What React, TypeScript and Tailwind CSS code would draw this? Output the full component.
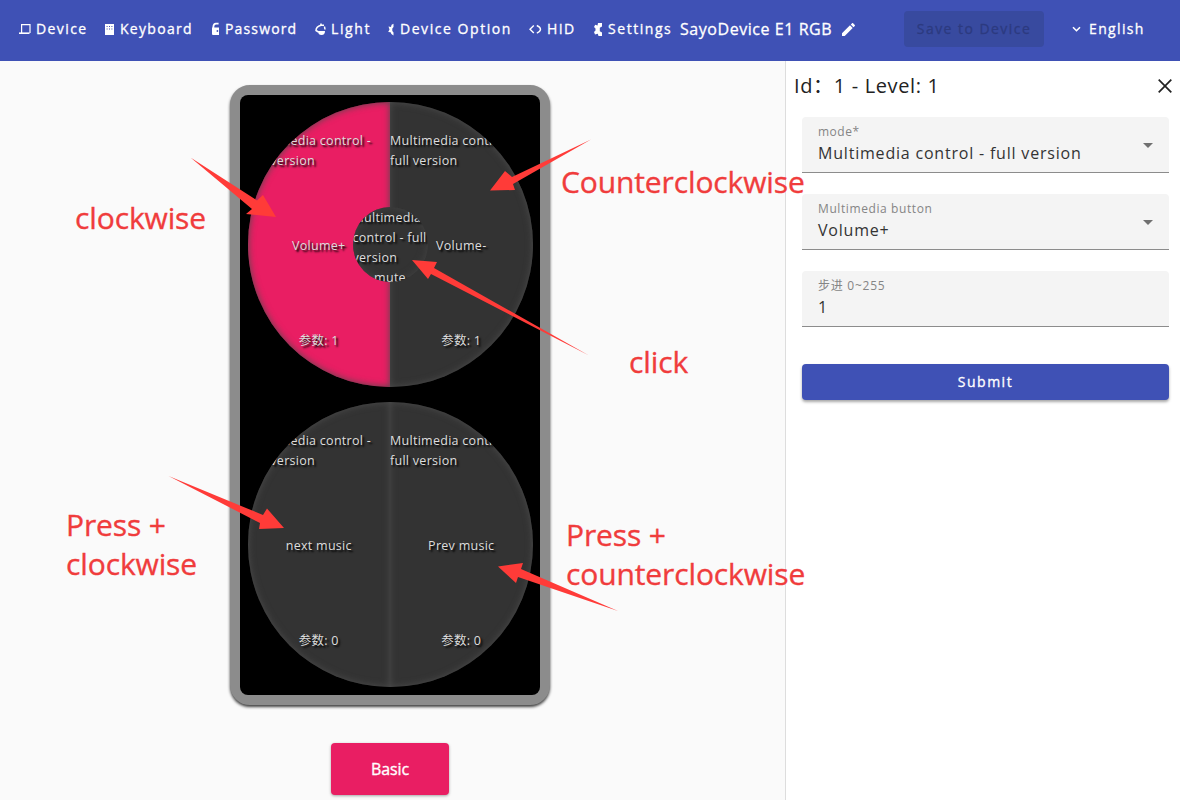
import React from 'react';

const Laptop = () => (
  <svg width="17" height="18" viewBox="0 0 17 18" fill="none" stroke="white" strokeWidth="1.2">
    <path d="M2.6 13V4.6H11V13" />
    <path d="M0 13.2H10.5" strokeWidth="1.6" />
  </svg>
);
const Keys = () => (
  <svg width="16" height="18" viewBox="0 0 16 18" fill="white">
    <path d="M1 4h9v11H1z" />
    <path d="M2.6 6h1v1h-1zM5 6h1v1H5zM7.4 6h1v1h-1zM2.6 8.6h1v1h-1zM5 8.6h1v1H5zM7.4 8.6h1v1h-1z" fill="#3f51b5" />
  </svg>
);
const Lock = () => (
  <svg width="15" height="18" viewBox="0 0 15 18" fill="white">
    <path d="M2 7.500h7V15H3q-1 0-1-1z" />
    <path d="M3.400 8V6.500Q3.600 3.800 6 3.600H8.600" fill="none" stroke="white" strokeWidth="1.800" />
    <circle cx="7.400" cy="11" r=".9" fill="#3f51b5" />
  </svg>
);
const Bulb = () => (
  <svg width="16" height="18" viewBox="0 0 16 18" fill="none" stroke="white" strokeWidth="1.500">
    <path d="M9 5.300H6C3.500 6 1 8 1 10.500L3.500 12" />
    <path d="M6 3.500V5.500M9.500 6.500L10 9.500" />
    <path d="M3 11H10Q10 15 6.500 15T3 11" fill="white" stroke="none" />
  </svg>
);
const HalfGear = () => (
  <svg width="13" height="18" viewBox="0 0 13 18" fill="white">
    <path d="M6.500 3.800L4.600 4.800 4 7 1.500 6.500 2.500 9.500 1.200 12 3.600 12.200 4.400 14 6.500 15.500V12.500L5.300 11V8.500L6.500 7z" />
  </svg>
);
const Code = () => (
  <svg width="18" height="18" viewBox="0 0 18 18" fill="none" stroke="white" strokeWidth="1.400">
    <path d="M4.800 5.500L1 9.300 4.800 13.100M7.800 5.500Q11.500 7 11.500 9.300T7.800 13.100" />
  </svg>
);
const Gear = () => (
  <svg width="15" height="18" viewBox="0 0 15 18" fill="white">
    <path d="M5 3H9V6.500L6.800 7.800V11.200L9 12.500V16H5.500L4.800 13.800 2 14.500 1 12 2.500 10.500V8.500L1 7 2.200 4.800 4.500 5.500z" />
  </svg>
);

const nav = [
  { label: 'Device', icon: <Laptop />, box: 'w-[85px]', text: 'tracking-[1.4px]' },
  { label: 'Keyboard', icon: <Keys />, box: 'w-[106px]', text: 'tracking-[1.3px]' },
  { label: 'Password', icon: <Lock />, box: 'w-[105px]', text: 'tracking-[1.15px]' },
  { label: 'Light', icon: <Bulb />, box: 'w-[72px]', text: 'tracking-[1.6px]' },
  { label: 'Device Option', icon: <HalfGear />, box: 'w-[142px]', text: 'tracking-[1.55px]' },
  { label: 'HID', icon: <Code />, box: 'w-[64px]', text: 'tracking-[1.4px]' },
  { label: 'Settings', icon: <Gear />, box: 'w-[87px]', text: 'tracking-[1.55px]' },
];

function Header() {
  return (
    <header className="flex h-[61px] shrink-0 items-center bg-[#3f51b5] pb-[3px] pl-[19px] text-sm text-white [-webkit-text-stroke:0.300px]">
      {nav.map((n) => (
        <div key={n.label} className={`flex shrink-0 items-center whitespace-nowrap ${n.box}`}>
          {n.icon}
          <span className={n.text}>{n.label}</span>
        </div>
      ))}
      <span className="w-[162px] shrink-0 whitespace-nowrap text-base tracking-[0.550px]">SayoDevice E1 RGB</span>
      <svg width="13" height="13" viewBox="3 3 18 18" fill="white" className="shrink-0">
        <path d="M3 17.250V21h3.750L17.810 9.940l-3.750-3.750L3 17.250zM20.710 7.040a1 1 0 0 0 0-1.410l-2.340-2.340a1 1 0 0 0-1.410 0l-1.830 1.830 3.750 3.750 1.830-1.830z" />
      </svg>
      <button className="ml-[49px] h-9 w-[140px] shrink-0 whitespace-nowrap rounded bg-[#384a9f] tracking-[1.450px] text-[#2c3a80]">
        Save to Device
      </button>
      <svg width="9" height="8" viewBox="0 0 9 8" className="ml-7 shrink-0" fill="none" stroke="white" strokeWidth="1.600">
        <path d="M1 2.200L4.500 5.700 8 2.200" />
      </svg>
      <span className="ml-2 tracking-[1.350px]">English</span>
    </header>
  );
}

function Half({ title, action, value, active, side }: { title: string; action: string; value: string; active?: boolean; side: 'l' | 'r' }) {
  return (
    <div
      className={`grid h-full w-1/2 grid-rows-3 items-center overflow-hidden pt-[3px] shadow-[inset_0_0_7px_#4c4c4c] ${
        active ? 'bg-[#e91e63]' : 'bg-[#333]'
      } ${side === 'l' ? 'rounded-l-full' : 'rounded-r-full'}`}
    >
      <div className="w-[142px] pb-0.5">{title}</div>
      <div className="text-center">{action}</div>
      <div className="pt-0.5 text-center">{value}</div>
    </div>
  );
}

const MODE = 'Multimedia control - full version';

function Pad() {
  return (
    <div className="h-[620px] w-[320px] rounded-[20px] border-10 border-[#8c8c8c] bg-[#8c8c8c] shadow-[0_2px_3px_rgba(0,0,0,0.75)]">
      <div className="flex h-full flex-col items-center gap-[15px] rounded-lg bg-black pt-[7px] text-[12.500px] leading-5 tracking-[0.280px] text-[#ddd] [text-shadow:2px_2px_2px_#000]">
        <div className="relative flex h-[285px] w-[285px]">
          <Half side="l" title={MODE} action="Volume+" value="参数: 1" active />
          <Half side="r" title={MODE} action="Volume-" value="参数: 1" />
          <div className="absolute left-[105px] top-[105px] h-[75px] w-[75px] overflow-hidden rounded-full bg-[#333] pt-px shadow-[inset_0_0_8px_#444]">
            <div className="w-[80px]">{MODE}</div>
            <div className="text-center">mute</div>
          </div>
        </div>
        <div className="flex h-[285px] w-[285px]">
          <Half side="l" title={MODE} action="next music" value="参数: 0" />
          <Half side="r" title={MODE} action="Prev music" value="参数: 0" />
        </div>
      </div>
    </div>
  );
}

function Field({ label, value, select, labelClass }: { label: string; value: string; select?: boolean; labelClass: string }) {
  return (
    <div className="flex h-14 items-center justify-between rounded-t border-b border-[#8c8c8c] bg-[#f4f4f4] pl-4 pr-4">
      <div className="flex flex-col">
        <span className={`text-xs leading-[18px] text-[#858585] ${labelClass}`}>{label}</span>
        <span className="-mt-px pb-px text-base leading-[26px] tracking-[0.800px] text-[#333]">{value}</span>
      </div>
      {select && (
        <svg width="10" height="5" viewBox="0 0 10 5" fill="#707070" className="mt-0.5">
          <path d="M0 0h10L5 5z" />
        </svg>
      )}
    </div>
  );
}

function Panel() {
  return (
    <aside className="w-[395px] shrink-0 border-l border-[#ddd] bg-white">
      <div className="flex h-[50px] items-center justify-between pl-2 pr-2 text-[#222]">
        <h2 className="whitespace-pre text-xl tracking-[0.650px]">Id：1 - Level: 1</h2>
        <svg width="14" height="14" viewBox="0 0 14 14" fill="none" stroke="#222" strokeWidth="1.700">
          <path d="M.7.7l12.600 12.600M13.300.7L.7 13.300" />
        </svg>
      </div>
      <div className="flex flex-col gap-[21px] pl-4 pr-[11px] pt-[6px]">
        <Field label="mode*" value={MODE} select labelClass="tracking-[0.500px]" />
        <Field label="Multimedia button" value="Volume+" select labelClass="tracking-[0.600px]" />
        <Field label="步进 0~255" value="1" labelClass="tracking-[0.750px]" />
        <button className="mt-4 h-9 rounded bg-[#3f51b5] text-sm tracking-[1.500px] text-white shadow-[0_2px_3px_rgba(0,0,0,0.350)] [-webkit-text-stroke:0.300px]">
          Submit
        </button>
      </div>
    </aside>
  );
}

const notes = [
  { text: 'clockwise', pos: 'left-[75px] top-[198px]' },
  { text: 'Counterclockwise', pos: 'left-[561px] top-[162px]' },
  { text: 'click', pos: 'left-[629px] top-[342px]' },
  { text: 'Press +\nclockwise', pos: 'left-[66px] top-[505px]' },
  { text: 'Press +\ncounterclockwise', pos: 'left-[566px] top-[515px]' },
];

function Annotations() {
  return (
    <div className="pointer-events-none absolute inset-0">
      <svg width="1180" height="800" fill="#ff3b38">
        <path d="M190.500 157.500L257 200.500 263 195 276 217 246 214 252 209z" />
        <path d="M591 139.500L512 177 505 171 490 190.500 515 190 513 184z" />
        <path d="M589 355.500L434 268 437 262 412 260 428 279 431 274z" />
        <path d="M168.500 476L263 515 267 508.500 284 528 259 529 260 523z" />
        <path d="M618 611L521 569 523 563 498 566.500 516 583 518 577z" />
      </svg>
      {notes.map((n) => (
        <div key={n.text} className={`absolute whitespace-pre text-[30px] leading-[39px] tracking-[-0.120px] text-[#f03c3c] [-webkit-text-stroke:0.350px] ${n.pos}`}>
          {n.text}
        </div>
      ))}
    </div>
  );
}

export default function App() {
  return (
    <div className="relative flex h-[800px] w-[1180px] flex-col overflow-hidden bg-[#fafafa] font-['Open_Sans','Noto_Sans_CJK_SC',sans-serif]">
      <Header />
      <div className="flex min-h-0 flex-1">
        <main className="flex flex-1 flex-col items-center pl-[230px] pr-[235px] pt-6">
          <Pad />
          <button className="mt-[38px] h-[52px] w-[118px] shrink-0 rounded-sm bg-[#e91e63] text-base tracking-[-0.100px] text-white shadow-[0_1px_3px_rgba(0,0,0,0.350)] [-webkit-text-stroke:0.350px]">
            Basic
          </button>
        </main>
        <Panel />
      </div>
      <Annotations />
    </div>
  );
}
